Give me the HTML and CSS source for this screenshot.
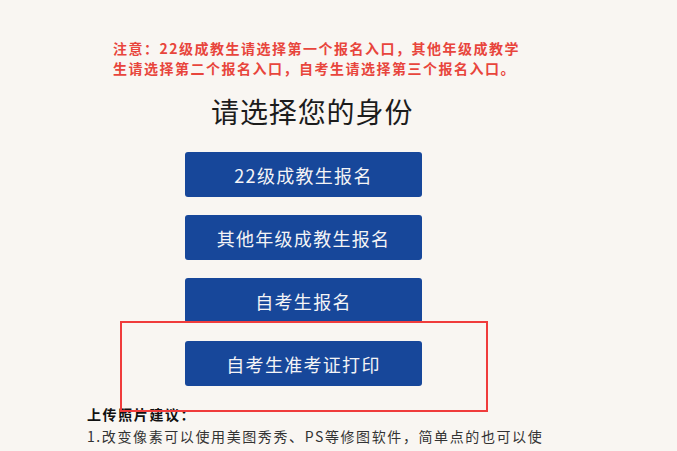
FILE: index.html
```html
<!DOCTYPE html>
<html lang="zh-CN">
<head>
<meta charset="utf-8">
<title>请选择您的身份</title>
<link rel="stylesheet" href="styles.css">
</head>
<body>
<div class="page">
  <p class="notice">注意：22级成教生请选择第一个报名入口，其他年级成教学<br>生请选择第二个报名入口，自考生请选择第三个报名入口。</p>
  <h1 class="title">请选择您的身份</h1>
  <div class="btns">
    <a class="btn">22级成教生报名</a>
    <a class="btn">其他年级成教生报名</a>
    <a class="btn">自考生报名</a>
    <a class="btn">自考生准考证打印</a>
  </div>
  <div class="tips">
    <p class="tips-title">上传照片建议：</p>
    <p class="tips-line">1.改变像素可以使用美图秀秀、PS等修图软件，简单点的也可以使<br>用电脑系统自带的画图工具进行修改。</p>
  </div>
  <div class="annot"></div>
</div>
</body>
</html>
```
FILE: styles.css
```css
html, body {
  margin: 0;
  padding: 0;
  background: #f9f6f2;
}
body {
  font-family: "Noto Sans CJK SC", "Noto Sans", sans-serif;
  overflow: hidden;
  height: 451px;
}
.page {
  position: relative;
  margin-left: 87px;
  width: 460px;
  padding-top: 38px;
}
.notice {
  margin: 0;
  padding-left: 26px;
  font-size: 14px;
  line-height: 20px;
  font-weight: 700;
  letter-spacing: 1.5px;
  color: #e8453c;
  white-space: nowrap;
}
.title {
  margin: 15px 0 0 0;
  padding-left: 124px;
  font-size: 28px;
  line-height: 36px;
  font-weight: 400;
  letter-spacing: 0.9px;
  color: #1c1c1c;
  white-space: nowrap;
}
.btns {
  margin-top: 23px;
  margin-left: 98px;
  display: flex;
  flex-direction: column;
  gap: 18px;
  width: 237px;
}
.btn {
  display: flex;
  align-items: center;
  justify-content: center;
  height: 45px;
  border-radius: 3px;
  background: #17479a;
  color: #f4f4f6;
  font-size: 18px;
  letter-spacing: 1.3px;
  white-space: nowrap;
}
.tips {
  margin-top: 17px;
  color: #222;
}
.tips p {
  margin: 0;
  font-size: 14px;
  line-height: 22px;
  letter-spacing: 1.6px;
  white-space: nowrap;
}
.tips-title {
  font-weight: 700;
  color: #111;
}
.tips-line {
  color: #333;
}
.annot {
  position: absolute;
  left: 33px;
  top: 321px;
  width: 368px;
  height: 91px;
  box-sizing: border-box;
  border: 2px solid #f03c3c;
}
```
